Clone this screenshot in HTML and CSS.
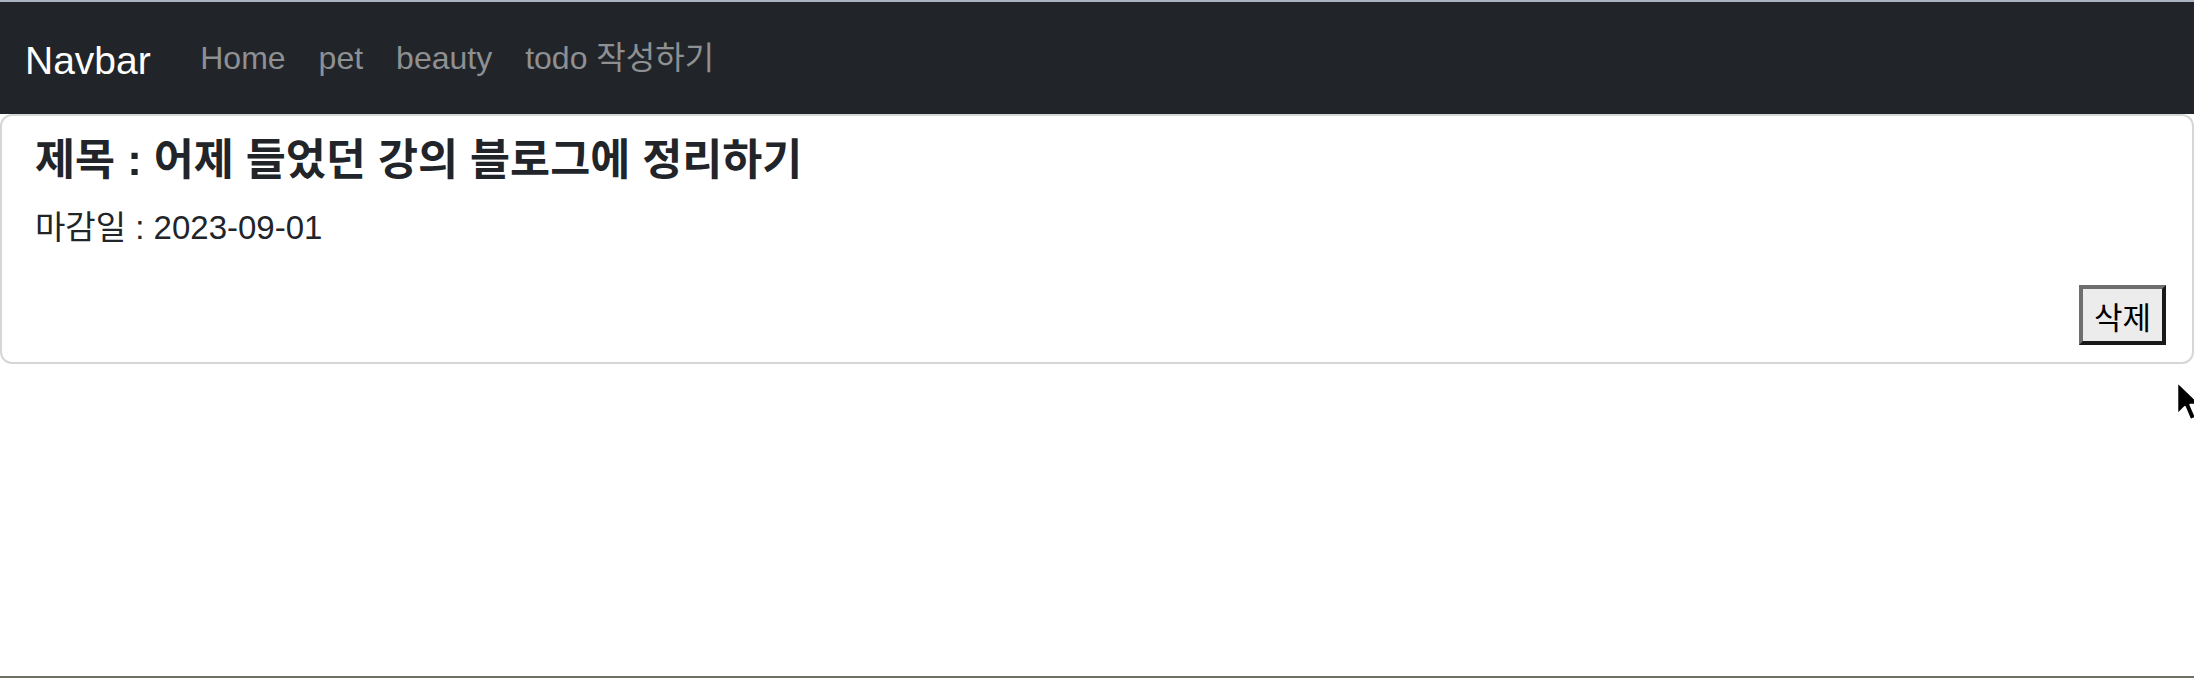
FILE: index.html
```html
<!DOCTYPE html>
<html lang="ko">
<head>
<meta charset="utf-8">
<title>Todo</title>
<link rel="stylesheet" href="styles.css">
</head>
<body>
<div class="topline"></div>
<nav class="navbar">
  <a class="brand" href="#">Navbar</a>
  <ul class="nav-links">
    <li><a href="#">Home</a></li>
    <li><a href="#">pet</a></li>
    <li><a href="#">beauty</a></li>
    <li><a href="#">todo 작성하기</a></li>
  </ul>
</nav>
<main class="content">
  <section class="card">
    <h5 class="card-title">제목 : 어제 들었던 강의 블로그에 정리하기</h5>
    <p class="card-text">마감일 : 2023-09-01</p>
    <div class="card-actions">
      <button class="btn-delete" type="button">삭제</button>
    </div>
  </section>
</main>
<svg class="cursor" width="28" height="44" viewBox="0 0 20 32" aria-hidden="true">
  <path d="M1.5 1.5 L1.5 25 L7 19.5 L11 29 L15 27.3 L11 18 L18.5 18 Z" fill="#000" stroke="#fff" stroke-width="1.4" stroke-linejoin="round"/>
</svg>
<div class="bottomline"></div>
</body>
</html>
```

FILE: styles.css
```css
html, body {
  margin: 0;
  padding: 0;
}
body {
  background: #ffffff;
  font-family: "Liberation Sans", "Noto Sans CJK KR", sans-serif;
  color: #212529;
  width: 2194px;
  height: 678px;
  position: relative;
  overflow: hidden;
  display: flex;
  flex-direction: column;
}
.topline {
  height: 2px;
  background: #aab4c0;
  flex: none;
}
.navbar {
  flex: none;
  height: 112px;
  background: #212529;
  display: flex;
  align-items: center;
  padding-left: 25px;
  box-sizing: border-box;
}
.brand {
  color: #ffffff;
  font-size: 39px;
  text-decoration: none;
  margin-right: 33px;
  line-height: 1;
  position: relative;
  top: 2px;
}
.nav-links {
  list-style: none;
  display: flex;
  margin: 0;
  padding: 0;
}
.nav-links a {
  display: block;
  color: #8e9093;
  font-size: 32px;
  text-decoration: none;
  padding: 0 16.5px;
  line-height: 1;
}
.content {
  flex: 1;
}
.card {
  border: 2px solid #d6d6d6;
  border-radius: 12px;
  padding: 20px 26px 17px 33px;
  background: #fff;
}
.card-title {
  margin: 0 0 20px;
  font-size: 43.5px;
  font-weight: 700;
  line-height: 48px;
  color: #212529;
}
.card-text {
  margin: 0;
  font-size: 33px;
  line-height: 48px;
  color: #212529;
}
.card-actions {
  display: flex;
  justify-content: flex-end;
  margin-top: 33px;
}
.btn-delete {
  width: 87px;
  height: 60px;
  box-sizing: border-box;
  border: 4px outset #6e6e6e;
  background: #ececec;
  font-family: "Noto Sans CJK KR", sans-serif;
  font-size: 31px;
  color: #000;
  padding: 0;
  line-height: 1;
}
.cursor {
  position: absolute;
  left: 2175px;
  top: 380px;
}
.bottomline {
  flex: none;
  height: 2px;
  background: #6f6f66;
}
```
